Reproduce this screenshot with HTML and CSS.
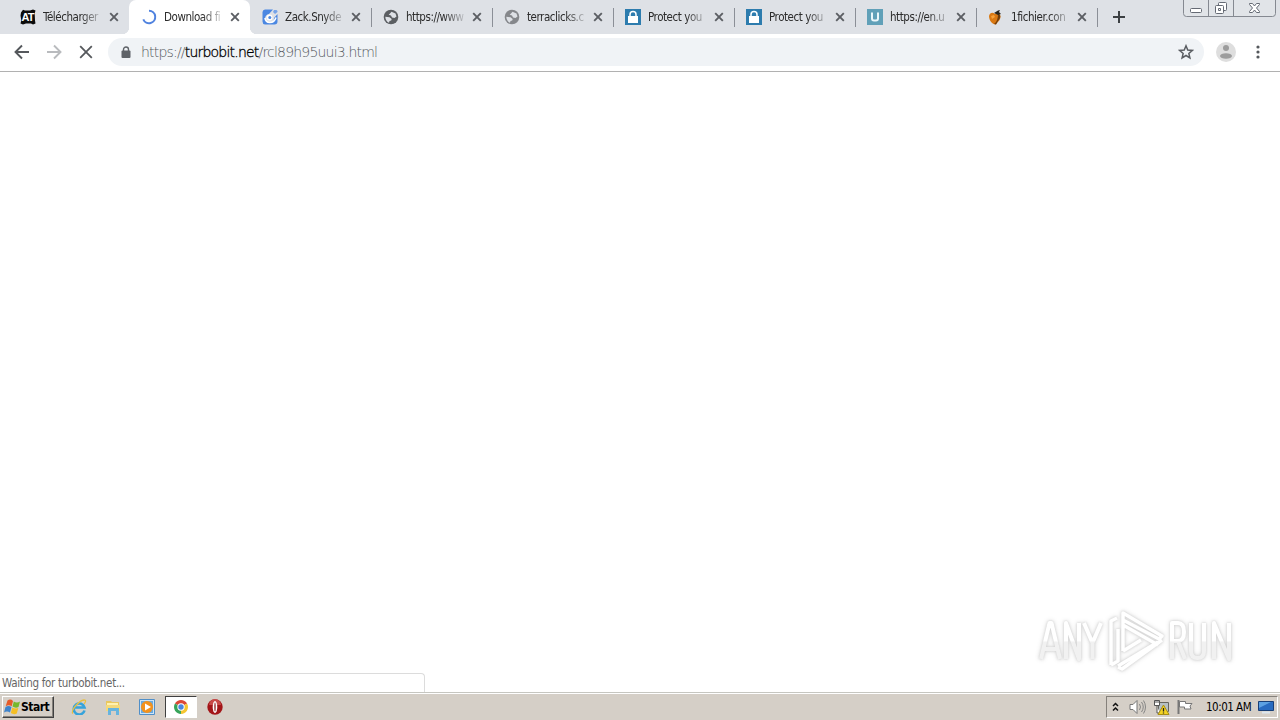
FILE: index.html
```html
<!DOCTYPE html>
<html lang="en">
<head>
  <meta charset="UTF-8" />
  <title>Download file</title>
  <link rel="stylesheet" href="styles.css">
</head>
<body>
  <svg class="defs" width="0" height="0">
    <symbol id="close" viewBox="0 0 10 10"><path d="M1.200 1.200l7.600 7.600M8.800 1.200L1.200 8.800" stroke="#5b5e63" stroke-width="1.900"/></symbol>
    <symbol id="globe" viewBox="0 0 16 16">
      <circle cx="8" cy="8" r="7.300" fill="currentColor"/>
      <path d="M8.500 2.800l4 1.700 1 3-2 1.500-2.500-.5-1-2-2.300-.7L7 4.500zM2.300 7.800l4.200.5 2.200 1.700-.5 1.500-1.700.5-.5 1.800c-2-.7-3.700-3-3.700-6z" fill="#dee1e6"/>
    </symbol>
    <symbol id="padlock" viewBox="0 0 16 16">
      <path fill="#2d7cae" d="M0 0h16v16H0z"/>
      <path d="M5 8V5.500a3 3 0 0 1 6 0V8" fill="none" stroke="#fff" stroke-width="1.500"/>
      <path fill="#fff" d="M3 7h10v7H3z"/>
    </symbol>
  </svg>

  <div class="tabstrip">
    <div class="tab">
      <svg class="favicon" viewBox="0 0 16 16"><path d="M3 .8l2 .7h5l3-1 2.500 1-.8 3 .3 7 .5 3-2.500 1-2-1H6l-3 1-2.500-1 .8-3-.8-5 .5-3z" fill="#0c0c0c"/><text x="7.500" y="12.300" font-family="Liberation Sans" font-weight="bold" font-size="11" letter-spacing="-1" text-anchor="middle" fill="#fff">AT</text></svg>
      <span class="title">Télécharger</span>
      <svg class="close"><use href="#close"/></svg>
    </div>
    <div class="tab active">
      <svg class="favicon" viewBox="0 0 16 16"><path d="M8 1.800a6.200 6.200 0 1 1-5.700 8.600" fill="none" stroke="#4f82df" stroke-width="2"/></svg>
      <span class="title">Download fi</span>
      <svg class="close"><use href="#close"/></svg>
    </div>
    <div class="tab">
      <svg class="favicon" viewBox="0 0 16 16"><path d="M3 .5h8L7 5a4.500 4.500 0 1 0 5 4l3.500-4v7.500a3 3 0 0 1-3 3H3a3 3 0 0 1-2.500-3V3A3 3 0 0 1 3 .5z" fill="#4a87e2"/><path d="M3 9a4.700 4.700 0 0 0 5 4.500c3 0 5-2 6-5" fill="none" stroke="#fff" stroke-width="1.600"/><circle cx="7.500" cy="8.500" r="3" fill="#fff"/><circle cx="7.800" cy="8.500" r="1.500" fill="#4a87e2"/><path d="M12 1h2.500l1 1v1L13 5l-2-2z" fill="#76a4e9"/></svg>
      <span class="title">Zack.Snyde</span>
      <svg class="close"><use href="#close"/></svg>
    </div>
    <div class="tab line">
      <svg class="favicon dark"><use href="#globe"/></svg>
      <span class="title">https://www</span>
      <svg class="close"><use href="#close"/></svg>
    </div>
    <div class="tab line">
      <svg class="favicon grey"><use href="#globe"/></svg>
      <span class="title">terraclicks.c</span>
      <svg class="close"><use href="#close"/></svg>
    </div>
    <div class="tab line">
      <svg class="favicon"><use href="#padlock"/></svg>
      <span class="title">Protect you</span>
      <svg class="close"><use href="#close"/></svg>
    </div>
    <div class="tab line">
      <svg class="favicon"><use href="#padlock"/></svg>
      <span class="title">Protect you</span>
      <svg class="close"><use href="#close"/></svg>
    </div>
    <div class="tab line">
      <svg class="favicon" viewBox="0 0 16 16"><path fill="#60a0b8" d="M0 0h16v16H0z"/><path d="M5 3.500v6a2 2 0 0 0 2 2h2a2 2 0 0 0 2-2v-6" fill="none" stroke="#e9f6fa" stroke-width="2"/></svg>
      <span class="title">https://en.u</span>
      <svg class="close"><use href="#close"/></svg>
    </div>
    <div class="tab line">
      <svg class="favicon" viewBox="0 0 16 16"><path d="M1 7c1-4 4-4 6-2 3-1 6 0 5.500 3-.5 4-3 5-4.500 7.500C5 15.500 1 12 1 7z" fill="#d97812"/><path d="M10 5c3 0 3 4 0 7l-2 3.500-2-.5c3-2 4-6 4-10z" fill="#713d0b"/><path d="M3 7l3-1 1 2-3 2z" fill="#f6a13a"/><path d="M6 4l4-2.500L12 1l-1 2 2 2-3 1-2-1z" fill="#29261f"/></svg>
      <span class="title">1fichier.con</span>
      <svg class="close"><use href="#close"/></svg>
    </div>
    <div class="new-tab line">
      <svg width="12" height="12" viewBox="0 0 12 12"><path d="M6 0v12M0 6h12" stroke="#3c4043" stroke-width="2"/></svg>
    </div>
    <svg class="window-buttons" width="93" height="17" viewBox="0 0 93 17">
      <path d="M.5 0v13.500q0 3 3 3h86q3 0 3-3V0M25.500 0v16M50.500 0v16" fill="#e1e4e8" stroke="#858991"/>
      <g fill="#fff" stroke="#656a74">
        <rect x="7.500" y="8.500" width="11" height="4" rx="1"/>
        <rect x="35.500" y="2.500" width="8" height="8" rx="1"/>
        <rect x="32.500" y="5.500" width="8" height="8" rx="1"/>
        <path d="M35.500 8.500h2v2h-2z"/>
        <path d="M66.500 3.500h3l2 2.500 2-2.500h3v1L73.500 8l3 3.500v1h-3l-2-2.500-2 2.500h-3v-1l3-3.500-3-3.500z"/>
      </g>
    </svg>
  </div>

  <div class="toolbar">
    <svg class="nav" viewBox="0 0 16 16"><path d="M15 8H2M8 1.500L1.500 8 8 14.500" fill="none" stroke="#55585c" stroke-width="1.900"/></svg>
    <svg class="nav" viewBox="0 0 16 16"><path d="M1 8h13M8 1.500L14.500 8 8 14.500" fill="none" stroke="#b9bbbe" stroke-width="1.900"/></svg>
    <svg class="nav" viewBox="0 0 16 16"><path d="M2.200 2.200l11.600 11.600M13.800 2.200L2.200 13.800" stroke="#55585c" stroke-width="1.800"/></svg>
    <div class="omnibox">
      <svg width="10" height="13" viewBox="0 0 10 13"><path d="M2.500 6V3.500a2.500 2.500 0 0 1 5 0V6" fill="none" stroke="#5f6368" stroke-width="1.400"/><rect x=".5" y="4.500" width="9" height="7.500" rx="1" fill="#5f6368"/></svg>
      <span class="url">https://<b>turbobit.net</b>/rcl89h95uui3.html</span>
      <svg class="star" width="16" height="16" viewBox="0 0 16 16"><path d="M8 1.800l1.750 4.200 4.550.4-3.450 3 1.050 4.500L8 11.500l-3.900 2.400 1.050-4.500-3.450-3 4.550-.4z" fill="none" stroke="#5a5d62" stroke-width="1.500"/></svg>
    </div>
    <svg class="avatar" width="20" height="20" viewBox="0 0 20 20"><circle cx="10" cy="10" r="10" fill="#dedede"/><circle cx="10" cy="6" r="3" fill="#9c9c9c"/><ellipse cx="10" cy="14" rx="6" ry="2.800" fill="#9c9c9c"/></svg>
    <svg class="dots" width="4" height="14" viewBox="0 0 4 14" fill="#55585c"><circle cx="2" cy="2" r="1.600"/><circle cx="2" cy="7" r="1.600"/><circle cx="2" cy="12" r="1.600"/></svg>
  </div>

  <div class="page">
    <svg class="watermark" width="206" height="68" viewBox="0 0 206 68">
      <defs>
        <linearGradient id="fade" gradientUnits="userSpaceOnUse" x1="0" y1="17" x2="0" y2="54">
          <stop offset=".5" stop-color="#fff"/>
          <stop offset=".55" stop-color="#f1f1f1"/>
        </linearGradient>
      </defs>
      <g class="mark letters" fill="none" stroke="url(#fade)">
        <path d="M7 54l8.500-36h2L26 54M10 44h13M32 54V18l13 36V18M50 18l8.500 20L67 18M58.500 37v17M138 54V18h6q6 0 6 9t-6 9h-6M144 36l7 18M157 18v28q0 7 6.500 7t6.500-7V18M180 54V18l15 36V18"/>
      </g>
      <g class="mark" fill="none">
        <path d="M77 60V16l6-3M77 60l7-4V24"/>
        <path d="M89 46V8l39 23-3 3-36-19M89 20l35 20"/>
        <path d="M128 35L88 64l-4-2M124 37L84 61M89 46l18-11"/>
      </g>
    </svg>
    <div class="status">Waiting for turbobit.net...</div>
  </div>

  <div class="taskbar">
    <div class="start">
      <svg width="17" height="16" viewBox="0 0 17 16"><path d="M3.500 1.500q3-2 5.500.5L7.700 7.200q-3-2-6 0z" fill="#e65b28"/><path d="M9.800 2.500q3 2 6.200 0L14.500 8q-3 1.500-6-.5z" fill="#76b82b"/><path d="M1.500 8q3-2 6 0L6 13.500q-3-2-6 0z" fill="#3e83cb"/><path d="M8.300 8.500q3 1.500 6 .5l-1.500 5.500q-3 1.500-6-.5z" fill="#f5bf24"/></svg>
      <span>Start</span>
    </div>
    <div class="launch">
      <svg viewBox="0 0 16 16"><path d="M13.500 11.500A5.500 5.500 0 1 1 13.500 8.500H4" fill="none" stroke="#36a3db" stroke-width="2.600"/><path d="M2 14.500C-1 12 8 1.500 13 1c3 0 1 3 0 4" fill="none" stroke="#e8bf42" stroke-width="1.300"/></svg>
      <svg viewBox="0 0 16 16"><path d="M1 2h5l1 1h7v9H1z" fill="#e9c75e"/><path d="M2 4h11v6H2z" fill="#fff1ae"/><path d="M1 6h14v6H1z" fill="#f4d97a"/><path d="M3 16V9h11v7h-3v-4H6v4z" fill="#67b4de"/></svg>
      <svg viewBox="0 0 16 16"><path d="M.5.5h15v15H.500z" fill="#cce5f8" stroke="#508fc8"/><path d="M2 2h12v12H2z" fill="#69aae0"/><circle cx="8" cy="8" r="6" fill="#f3921c"/><path d="M6 4.500l6 3.500-6 3.500z" fill="#fff"/></svg>
      <div class="task">
        <svg viewBox="0 0 16 16"><path d="M8 8L1.940 4.500A7 7 0 0 1 14.060 4.500z" fill="#dc4836"/><path d="M8 8v7A7 7 0 0 1 1.940 4.500z" fill="#37a45a"/><path d="M8 8l6.060-3.500A7 7 0 0 1 8 15z" fill="#f5c531"/><circle cx="8" cy="8" r="3.700" fill="#fff"/><circle cx="8" cy="8" r="2.700" fill="#4a86e0"/></svg>
      </div>
      <svg viewBox="0 0 16 16"><circle cx="8" cy="8" r="7.700" fill="#a31518"/><path d="M2 6a6 6 0 0 1 12 0z" fill="#c84a48"/><ellipse cx="8" cy="8" rx="2.300" ry="6" fill="#fff"/><ellipse cx="8" cy="8" rx=".8" ry="4.500" fill="#a04446"/></svg>
    </div>
    <div class="tray">
      <svg class="chevrons" width="7" height="10" viewBox="0 0 7 10"><path d="M1 4l2.500-2.500L6 4M1 8.500L3.500 6 6 8.500" fill="none" stroke="#111" stroke-width="1.500"/></svg>
      <svg width="17" height="16" viewBox="0 0 17 16"><path d="M1 5.500h3l4-4v13l-4-4H1z" fill="#fff" stroke="#777"/><path d="M10.500 5q2 3 0 6M12.500 3q3.500 5 0 10M14.500 1.500q4 6.500 0 13" fill="none" stroke="#858585"/></svg>
      <svg width="17" height="16" viewBox="0 0 17 16"><path d="M5.500 3.500h10v9h-10z" fill="#b6c0c4" stroke="#66665f"/><path d="M1.500 1.500h5v5h-5zM4 7v7h3" fill="#fff" stroke="#555"/><path d="M3 1v3M5 1v3" stroke="#555"/><path d="M10.500 6L16 15.500H5z" fill="#f4d323" stroke="#a88e15"/><path d="M10.500 9v3.500M10.500 13.500v1" stroke="#222" stroke-width="1.300"/></svg>
      <svg class="flag" width="17" height="16" viewBox="0 0 17 16"><path d="M1.500 1v14" stroke="#777" stroke-width="2"/><path d="M2.500 2.500h6v2h6.500l-2 2.500 1 3H7.500V8h-5z" fill="#fff" stroke="#777"/></svg>
      <span class="clock">10:01 AM</span>
      <svg width="16" height="14" viewBox="0 0 16 14"><path d="M.5 1.500h15v9H.500z" fill="#286bc0" stroke="#183f77"/><path d="M1 2h12L1 8z" fill="#5ca1e2"/><path d="M4 12.500h8" stroke="#dce6ee" stroke-width="2"/></svg>
    </div>
  </div>
</body>
</html>
```
FILE: styles.css
```css
* {
  box-sizing: border-box;
}
body {
  margin: 0;
  width: 1280px;
  height: 720px;
  overflow: hidden;
  display: flex;
  flex-direction: column;
  background: #fff;
  font-family: "DejaVu Sans Condensed", "DejaVu Sans", sans-serif;
  font-size: 11.5px;
  color: #2b2b2b;
}
svg {
  display: block;
  flex: none;
}
.defs {
  position: absolute;
}

/* tabs */
.tabstrip {
  height: 34px;
  flex: none;
  display: flex;
  background: #dee1e6;
  padding-left: 8px;
}
.tab {
  position: relative;
  width: 121px;
  flex: none;
  display: flex;
  align-items: center;
  padding-left: 12px;
}
.tab.active {
  background: #fff;
  border-radius: 7px 7px 0 0;
}
.tab.active::before,
.tab.active::after {
  content: "";
  position: absolute;
  bottom: 0;
  width: 7px;
  height: 7px;
}
.tab.active::before {
  left: -7px;
  background: radial-gradient(circle at 0 0, #dee1e6 7px, #fff 7.5px);
}
.tab.active::after {
  right: -7px;
  background: radial-gradient(circle at 100% 0, #dee1e6 7px, #fff 7.5px);
}
.line {
  background: linear-gradient(#8b8f97, #8b8f97) no-repeat 0 8px / 1px 19px;
}
.favicon {
  width: 16px;
  height: 16px;
}
.dark {
  color: #5b5e62;
}
.grey {
  color: #85878b;
}
.title {
  width: 62px;
  margin-left: 7px;
  white-space: nowrap;
  line-height: 16px;
  letter-spacing: -0.45px;
  -webkit-mask-image: linear-gradient(to right, #000 38px, transparent 62px);
  mask-image: linear-gradient(to right, #000 38px, transparent 62px);
}
.close {
  width: 10px;
  height: 10px;
  margin-left: 4px;
}
.new-tab {
  width: 40px;
  display: flex;
  align-items: center;
  padding-left: 16px;
}
.window-buttons {
  margin-left: auto;
  margin-right: 4px;
}

/* toolbar */
.toolbar {
  height: 38px;
  flex: none;
  display: flex;
  align-items: center;
  padding: 0 0 1px 14px;
  border-bottom: 1px solid #b1b1b1;
}
.nav {
  width: 16px;
  height: 16px;
  margin-right: 16px;
}
.omnibox {
  width: 1096px;
  height: 28px;
  margin-left: -2px;
  display: flex;
  align-items: center;
  padding: 0 10px 0 13px;
  border-radius: 14px;
  background: #f0f3f6;
}
.url {
  margin-left: 10px;
  font-family: "DejaVu Sans", sans-serif;
  font-weight: 200;
  font-size: 14px;
  letter-spacing: -0.8px;
  color: #55595d;
}
.url b {
  font-weight: 200;
  color: #000;
  -webkit-text-stroke: 0.3px #000;
}
.star {
  margin-left: auto;
}
.avatar {
  margin-left: 12px;
}
.dots {
  margin-left: 20px;
}

/* page */
.page {
  position: relative;
  flex: 1;
  display: flex;
  align-items: flex-end;
}
.status {
  width: 425px;
  height: 19px;
  padding-left: 2px;
  line-height: 19px;
  letter-spacing: -0.3px;
  border: 1px solid #dcdcdc;
  border-width: 1px 1px 0 0;
  border-radius: 0 4px 0 0;
  color: #666;
}
.watermark {
  position: absolute;
  left: 1034px;
  top: 533px;
  overflow: visible;
}
.mark {
  stroke: #fff;
  stroke-width: 3.5;
  stroke-linejoin: round;
  filter: drop-shadow(0 0 1px #d2d2d2) drop-shadow(0 0 2px #dcdcdc);
}
.letters {
  stroke: url(#fade);
  stroke-width: 4;
}

/* taskbar */
.taskbar {
  height: 28px;
  flex: none;
  display: flex;
  align-items: center;
  padding: 1px 2px 0 2px;
  background: #d5cfc7;
  border-top: 1px solid #c6c6c0;
  box-shadow: inset 0 1px #fff;
}
.start {
  width: 52px;
  height: 22px;
  display: flex;
  align-items: center;
  padding-left: 1px;
  border: 1px solid;
  border-color: #fff #404040 #404040 #fff;
  box-shadow: inset -1px -1px #85817b;
  font-weight: bold;
  color: #000;
}
.start span {
  font-size: 12px;
  letter-spacing: -0.5px;
}
.launch {
  display: flex;
  align-items: center;
  margin-left: 17px;
}
.launch svg {
  width: 16px;
  height: 16px;
  margin-right: 18px;
}
.launch .task {
  width: 32px;
  height: 22px;
  display: flex;
  align-items: center;
  justify-content: center;
  margin: 0 10px 0 -8px;
  background: #fff;
  border: 1px solid;
  border-color: #404040 #fff #fff #404040;
}
.launch .task svg {
  margin: 0 1px 0 0;
}
.tray {
  width: 172px;
  height: 22px;
  margin-left: auto;
  display: flex;
  align-items: center;
  padding-left: 5px;
  border: 1px solid;
  border-color: #85817b #fff #fff #85817b;
}
.tray svg {
  margin-right: 7px;
}
.tray .chevrons {
  margin-right: 10px;
}
.tray .flag {
  margin-right: 12px;
}
.clock {
  width: 47px;
  margin-right: 7px;
  white-space: nowrap;
  letter-spacing: -0.5px;
  color: #000;
}
```
